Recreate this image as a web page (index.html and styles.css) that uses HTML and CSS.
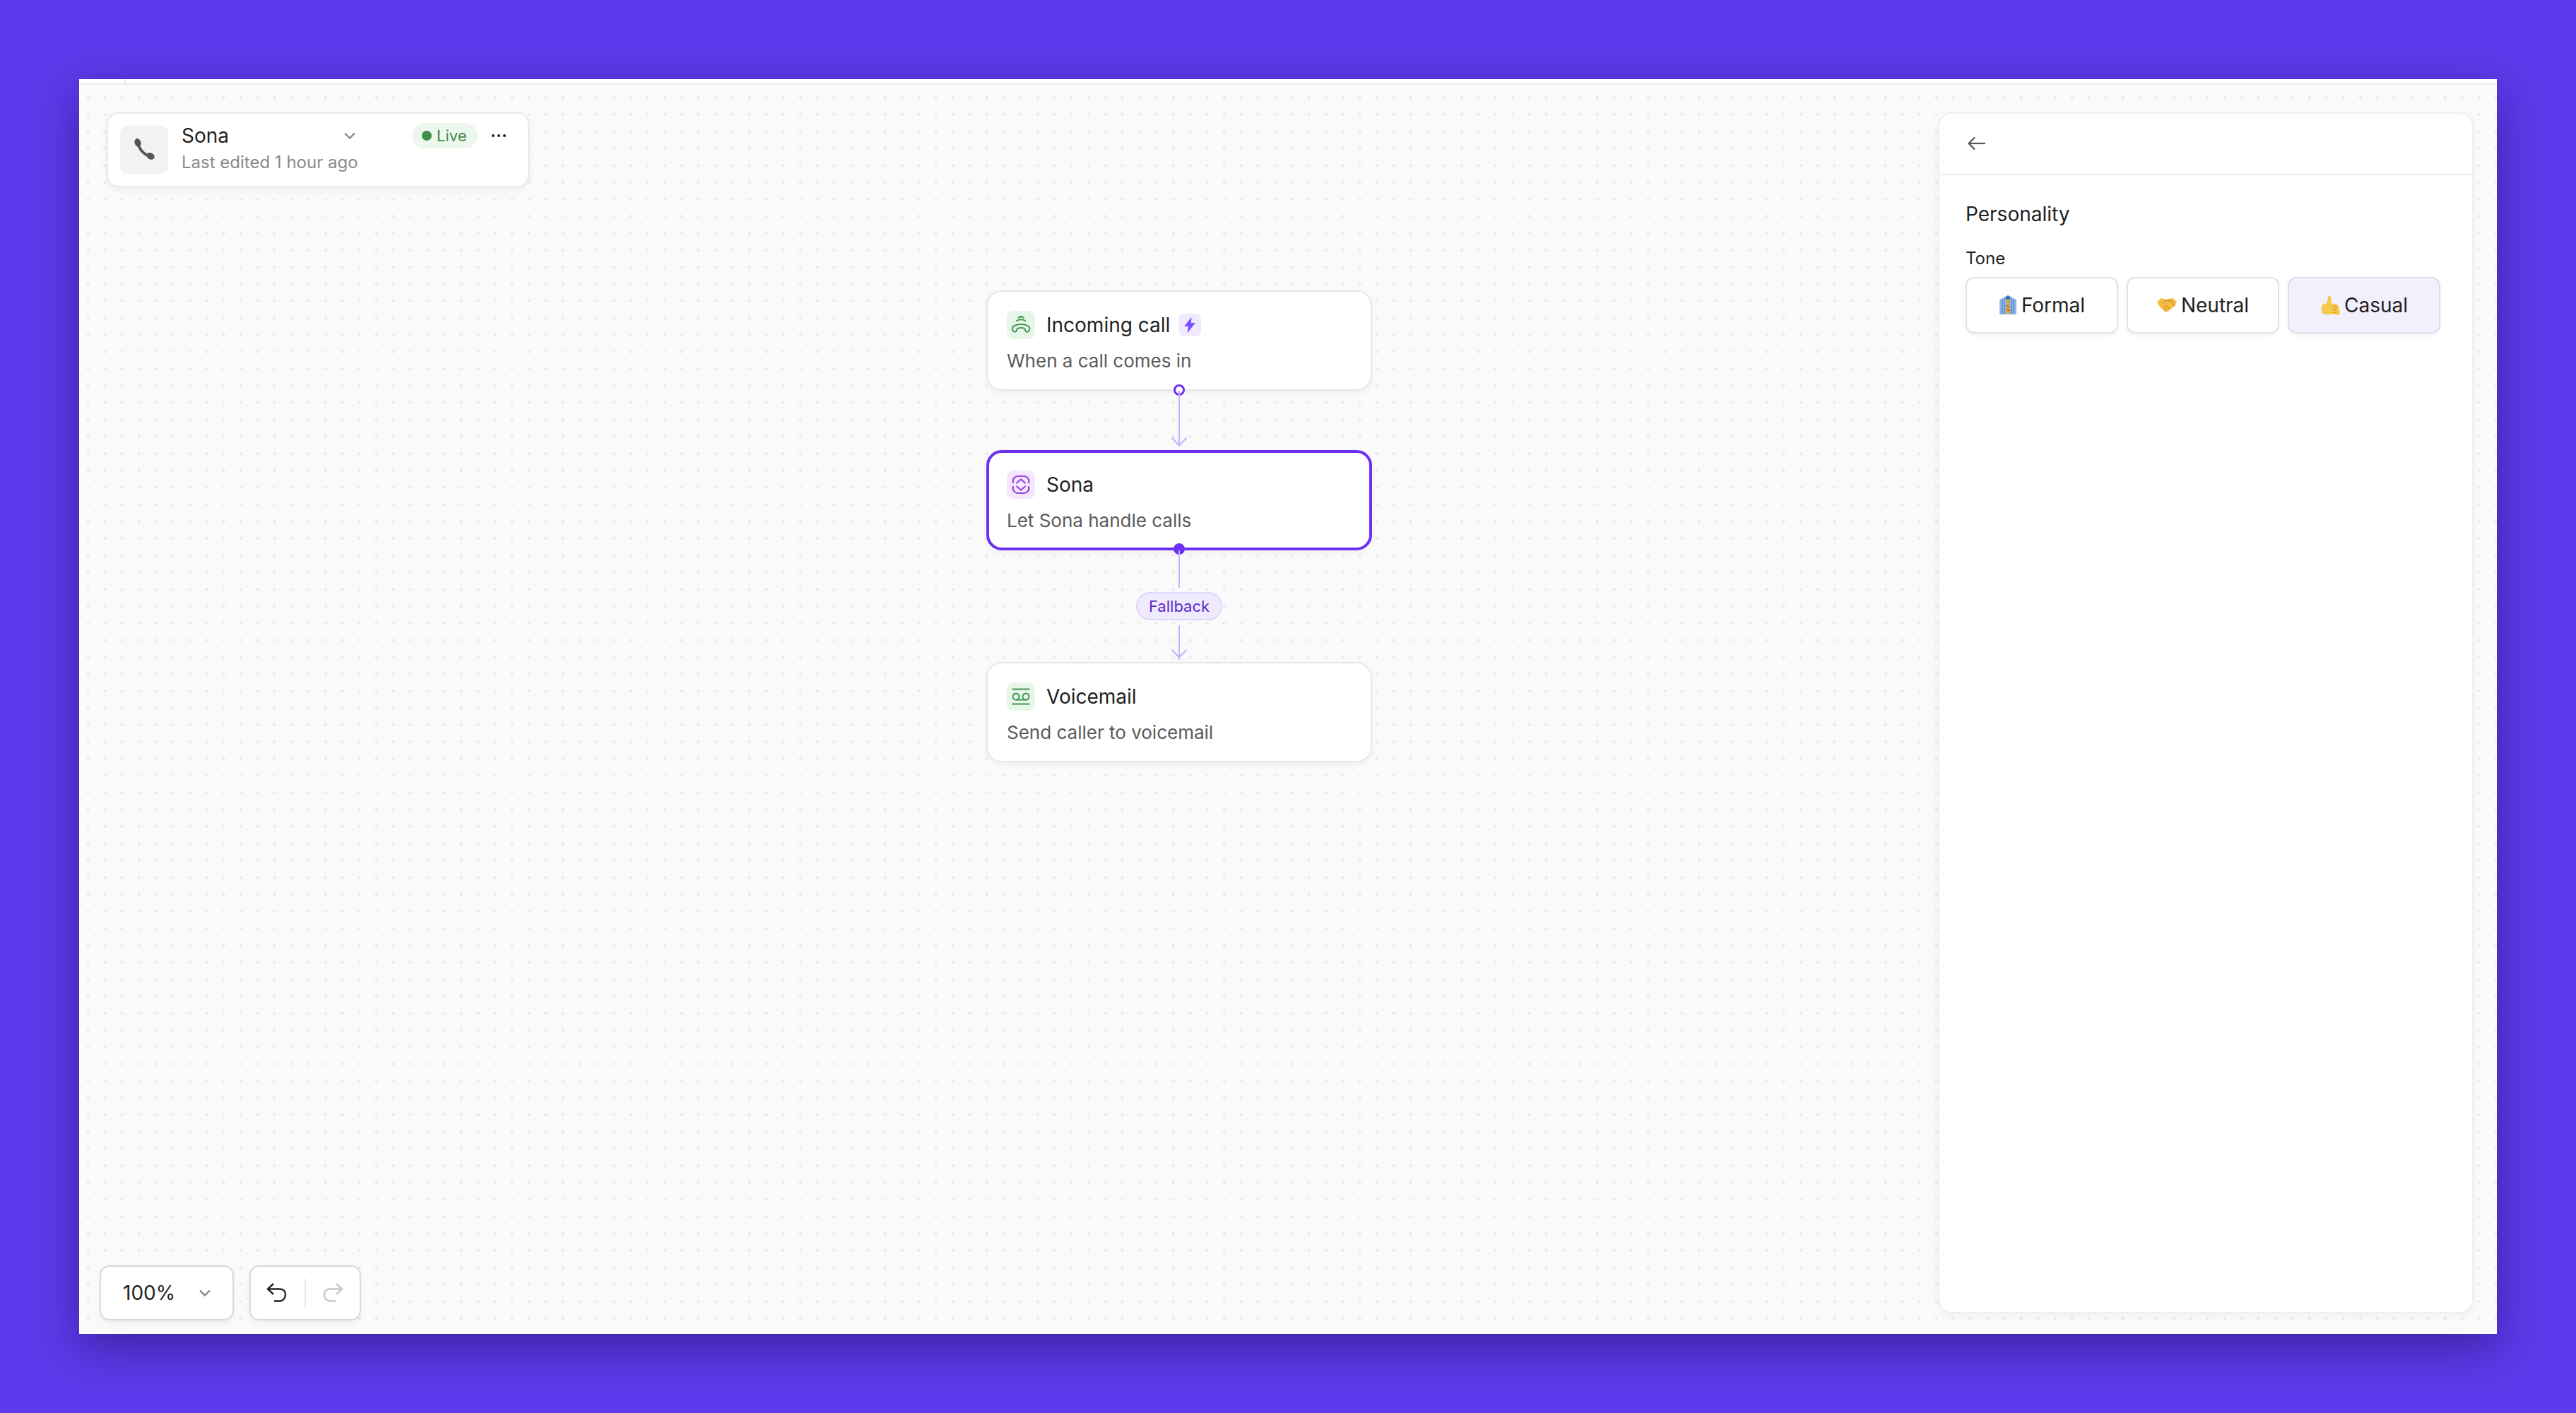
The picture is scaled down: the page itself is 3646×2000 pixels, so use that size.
FILE: index.html
```html
<!DOCTYPE html>
<html lang="en">
<head>
    <meta charset="UTF-8">
    <meta name="viewport" content="width=device-width, initial-scale=1.0">
    <title>Sona call flow</title>
    <link rel="stylesheet" href="styles.css">
</head>
<body>
    <div class="window">
        <div class="topbar"><div class="topbar-left"></div></div>
        <div class="canvas">
            <div class="agent-card">
                <div class="agent-icon">
                    <svg width="34" height="34" viewBox="0 0 34 34"><path d="M9 9C10 16 16 23 24 26" fill="none" stroke="#555" stroke-width="3.800"/><ellipse cx="8" cy="7" rx="4.400" ry="6" transform="rotate(-18 8 7)" fill="#555"/><ellipse cx="26" cy="26" rx="4.400" ry="6" transform="rotate(-62 26 26)" fill="#555"/></svg>
                </div>
                <div class="agent-main">
                    <div class="agent-row">
                        <div class="agent-name">Sona</div>
                        <svg class="agent-chevron" width="18" height="12" viewBox="0 0 18 12"><path d="M2 2.500l7 7 7-7" fill="none" stroke="#888" stroke-width="2.400"/></svg>
                        <div class="live-badge"><span class="live-dot"></span>Live</div>
                        <div class="more-dots"><span></span><span></span><span></span></div>
                    </div>
                    <div class="agent-edited">Last edited 1 hour ago</div>
                </div>
            </div>

            <div class="flow">
                <div class="node">
                    <div class="node-title">
                        <span class="node-icon icon-green">
                            <svg width="30" height="30" viewBox="0 0 30 30" fill="none" stroke="#3e9651" stroke-width="2" stroke-linecap="round"><path d="M11.500 4.500c2-1.300 5-1.300 7 0"/><path d="M9 9c3.400-2.200 8.600-2.200 12 0"/><path d="M4.500 24c-2.700-2.500-2.500-5.500 0-7.200 5.500-3.800 15.500-3.800 21 0 2.500 1.700 2.700 4.700 0 7.200-1.200 1-3 1-3.800 0-.9-1.300-.3-3.200-1.700-4-3-1.300-7-1.300-10 0-1.400.8-.8 2.700-1.700 4-.8 1-2.600 1-3.800 0z"/></svg>
                        </span>
                        Incoming call
                        <span class="bolt-badge">
                            <svg width="18" height="22" viewBox="0 0 18 22"><path d="M11 1L2 12.500h5.500L6 21l10-12.500h-6L11 1z" fill="#7c4dff" stroke="#7c4dff" stroke-width="1" stroke-linejoin="round"/></svg>
                        </span>
                    </div>
                    <div class="node-desc">When a call comes in</div>
                    <span class="handle"></span>
                </div>

                <div class="edge edge-short">
                    <svg class="edge-arrow" width="24" height="14" viewBox="0 0 24 14"><path d="M1.500 1.500L12 12.500 22.500 1.500" fill="none" stroke="#c4b2fb" stroke-width="2"/></svg>
                </div>

                <div class="node node-active">
                    <div class="node-title">
                        <span class="node-icon icon-purple">
                            <svg width="30" height="30" viewBox="0 0 30 30" fill="none" stroke="#9a46e0" stroke-width="2.200" stroke-linecap="round"><path d="M4 12C2.500 7 6.500 3 11 3h8c4.500 0 8.500 4 7 9"/><path d="M9 12.500l6-5 6 5"/><path d="M4 18c-1.500 5 2.500 9 7 9h8c4.500 0 8.500-4 7-9"/><path d="M9 17.500l6 5 6-5"/></svg>
                        </span>
                        Sona
                    </div>
                    <div class="node-desc">Let Sona handle calls</div>
                    <span class="handle handle-filled"></span>
                </div>

                <div class="edge edge-label">
                    <span class="edge-line edge-line-top"></span>
                    <span class="fallback">Fallback</span>
                    <span class="edge-line edge-line-bottom"></span>
                    <svg class="edge-arrow" width="24" height="14" viewBox="0 0 24 14"><path d="M1.500 1.500L12 12.500 22.500 1.500" fill="none" stroke="#c4b2fb" stroke-width="2"/></svg>
                </div>

                <div class="node">
                    <div class="node-title">
                        <span class="node-icon icon-green">
                            <svg width="30" height="30" viewBox="0 0 30 30" fill="none" stroke="#3e9651" stroke-width="2"><path d="M2.500 4.500h25"/><path d="M2.500 25.500h25"/><circle cx="8" cy="15" r="4.500"/><circle cx="22" cy="15" r="4.500"/><path d="M8 19.500h14"/></svg>
                        </span>
                        Voicemail
                    </div>
                    <div class="node-desc">Send caller to voicemail</div>
                </div>
            </div>

            <div class="canvas-tools">
                <div class="tool-box zoom-box">
                    <span>100%</span>
                    <svg width="18" height="12" viewBox="0 0 18 12"><path d="M2 2.500l7 7 7-7" fill="none" stroke="#888" stroke-width="2.400"/></svg>
                </div>
                <div class="tool-box history-box">
                    <svg width="30" height="30" viewBox="0 0 30 30" fill="none" stroke="#222" stroke-width="2.400"><path d="M10 2L2 9.500l8 7.500"/><path d="M2 9.500h17c5 0 8 3.200 8 8s-3.200 9-8 9h-8"/></svg>
                    <span class="tool-sep"></span>
                    <svg width="30" height="30" viewBox="0 0 30 30" fill="none" stroke="#c6c6c6" stroke-width="2.400"><path d="M20 2l8 7.500-8 7.500"/><path d="M28 9.500H11c-5 0-8 3.200-8 8s3.200 9 8 9h8"/></svg>
                </div>
            </div>

            <aside class="panel">
                <div class="panel-head">
                    <svg width="26" height="20" viewBox="0 0 26 20" fill="none" stroke="#555" stroke-width="2.200"><path d="M11 1.500L2.500 10l8.500 8.500"/><path d="M2.500 10H26"/></svg>
                </div>
                <div class="panel-body">
                    <div class="panel-title">Personality</div>
                    <div class="field-label">Tone</div>
                    <div class="tone-row">
                        <div class="tone-btn">
                            <svg width="26" height="28" viewBox="0 0 26 28"><path d="M1 6l7-3 5 3 5-3 7 3v21H1z" fill="#8fb6e6"/><path d="M5 6v21M8 5v22M21 6v21M18 5v22" stroke="#4f82c4" stroke-width="1.200"/><path d="M8 3l5-3 5 3-5 5z" fill="#3f74b8"/><path d="M11 6h4l.8 3-1.300 2 2 12-3.500 4-3.500-4 2-12-1.300-2z" fill="#e0a63a"/><path d="M10.500 14l5 3M10 19l6 3" stroke="#8a6a3a" stroke-width="1.200"/></svg>
                            Formal
                        </div>
                        <div class="tone-btn">
                            <svg width="28" height="20" viewBox="0 0 28 20"><path d="M0 5l6-5 7 2 3-1 6-1 6 5-3 6-10 8c-1.500 1-3 1-4 0L3 11z" fill="#f5bb45"/><path d="M9 6l5-3 6 1 5 7M12 10l6 5M9 12l5 5" stroke="#d18f1f" stroke-width="1.300" fill="none"/></svg>
                            Neutral
                        </div>
                        <div class="tone-btn tone-active">
                            <svg width="28" height="28" viewBox="0 0 28 28"><path d="M11 2c1.500-2 4.500-1 4.500 1.500V10l2 2h3c3 0 5 2 5.500 5l2 8-1.500 2.500c-2 .8-4 .3-6-.5H7c-3 0-5-2-5-5v-5c0-3 2-5 5-5h1l2-3z" fill="#f6c84c"/><path d="M18 16h6M18 20h6M18 24h5" stroke="#d79a24" stroke-width="1.300"/></svg>
                            Casual
                        </div>
                    </div>
                </div>
            </aside>
        </div>
    </div>
</body>
</html>
```

FILE: styles.css
```css
* {
    box-sizing: border-box;
}
html, body {
    height: 100%;
}
body {
    margin: 0;
    padding: 112px;
    background: #5d3aeb;
    font-family: 'Inter', sans-serif;
    color: #1f1f1f;
}
.window {
    display: flex;
    flex-direction: column;
    height: 1776px;
    background: #fafafa;
    box-shadow: 0 20px 60px rgba(20, 10, 70, 0.45);
}
.topbar {
    height: 8px;
    background: #fff;
    border-bottom: 2px solid #ececec;
}
.topbar-left {
    width: 66px;
    height: 6px;
    border-right: 2px solid #ececec;
}
.canvas {
    position: relative;
    flex: 1;
    background-color: #fafafa;
    background-image: radial-gradient(circle at 12px 12px, #ebebeb 1.800px, transparent 2.400px);
    background-size: 24px 24px;
    background-position: 0.67px 6px;
}

/* top left card */
.agent-card {
    position: absolute;
    left: 39px;
    top: 39px;
    width: 598px;
    height: 106px;
    display: flex;
    align-items: center;
    padding: 0 17px;
    background: #fff;
    border: 2px solid #e8e8e8;
    border-radius: 16px;
    box-shadow: 0 4px 12px rgba(0, 0, 0, 0.05);
}
.agent-icon {
    display: flex;
    align-items: center;
    justify-content: center;
    width: 68px;
    height: 68px;
    background: #f2f2f2;
    border-radius: 10px;
}
.agent-main {
    flex: 1;
    margin-left: 19px;
}
.agent-row {
    display: flex;
    align-items: center;
    height: 36px;
    margin-top: -5px;
}
.agent-name {
    width: 229px;
    font-size: 28px;
    line-height: 34px;
}
.live-badge {
    display: flex;
    align-items: center;
    gap: 7px;
    width: 93px;
    height: 36px;
    margin-left: 79px;
    padding-left: 14px;
    background: #eef7ee;
    border-radius: 18px;
    font-size: 22px;
    color: #3e8e47;
    white-space: nowrap;
}
.live-dot {
    width: 14px;
    height: 14px;
    background: #3e8e47;
    border-radius: 50%;
}
.more-dots {
    display: flex;
    gap: 4px;
    margin-left: 20px;
}
.more-dots span {
    width: 4px;
    height: 4px;
    background: #222;
    border-radius: 50%;
}
.agent-edited {
    margin-top: 5px;
    font-size: 24px;
    line-height: 30px;
    color: #8a8a8a;
    white-space: nowrap;
}

/* flow in the middle */
.flow {
    position: absolute;
    left: 1284px;
    top: 291px;
    width: 546px;
}
.node {
    position: relative;
    height: 142px;
    padding: 27px 27px 0;
    background: #fff;
    border: 2px solid #e7e7ea;
    border-radius: 22px;
    box-shadow: 0 3px 8px rgba(0, 0, 0, 0.05);
}
.node-active {
    border: 4px solid #6d2ff2;
    padding: 25px 25px 0;
}
.node-title {
    display: flex;
    align-items: center;
    font-size: 28px;
    line-height: 40px;
}
.node-icon {
    display: flex;
    align-items: center;
    justify-content: center;
    width: 40px;
    height: 40px;
    margin-right: 16px;
    border-radius: 9px;
}
.icon-green {
    background: #e8f6ea;
}
.icon-purple {
    background: #f4e7fe;
}
.bolt-badge {
    display: flex;
    align-items: center;
    justify-content: center;
    width: 32px;
    height: 32px;
    margin-left: 12px;
    background: #efe9ff;
    border-radius: 8px;
}
.node-desc {
    margin-top: 15px;
    font-size: 26px;
    line-height: 32px;
    color: #5a5a5a;
}
.handle {
    position: absolute;
    left: 50%;
    bottom: -9px;
    width: 16px;
    height: 16px;
    margin-left: -8px;
    background: #fff;
    border: 3px solid #6d2ff2;
    border-radius: 50%;
}
.handle-filled {
    background: #6d2ff2;
    bottom: -10px;
}
.edge {
    position: relative;
}
.edge-short {
    height: 84px;
}
.edge-short:before {
    content: "";
    position: absolute;
    left: 272px;
    top: 0;
    bottom: 6px;
    width: 2px;
    background: #c4b2fb;
}
.edge-arrow {
    position: absolute;
    left: 261px;
    bottom: 5px;
}
.edge-label {
    display: flex;
    flex-direction: column;
    align-items: center;
    height: 158px;
}
.edge-line {
    width: 2px;
    background: #c4b2fb;
}
.edge-line-top {
    height: 53px;
}
.edge-line-bottom {
    height: 49px;
    margin-top: 7px;
}
.fallback {
    display: flex;
    align-items: center;
    height: 40px;
    margin-top: 6px;
    padding: 0 16px;
    background: #f0eaff;
    border: 2px solid #e0d6fb;
    border-radius: 20px;
    font-size: 22px;
    color: #5a28c8;
}

/* bottom left tools */
.canvas-tools {
    position: absolute;
    left: 29px;
    bottom: 19px;
    display: flex;
    gap: 22px;
}
.tool-box {
    display: flex;
    align-items: center;
    height: 78px;
    background: #fff;
    border: 2px solid #d9d9d9;
    border-radius: 14px;
    box-shadow: 0 4px 10px rgba(0, 0, 0, 0.05);
}
.zoom-box {
    width: 190px;
    padding: 0 30px 0 31px;
    justify-content: space-between;
    font-size: 28px;
}
.history-box {
    width: 158px;
    padding: 0 23px 0 22px;
    justify-content: space-between;
}
.tool-sep {
    width: 2px;
    height: 40px;
    background: #e6e6e6;
}

/* right panel */
.panel {
    position: absolute;
    left: 2631px;
    top: 39px;
    width: 758px;
    height: 1700px;
    background: #fff;
    border: 2px solid #efefef;
    border-radius: 20px;
    box-shadow: 0 4px 14px rgba(0, 0, 0, 0.04);
}
.panel-head {
    display: flex;
    align-items: center;
    height: 87px;
    padding: 0 0 0 39px;
    border-bottom: 2px solid #ececec;
}
.panel-head svg {
    margin-top: -2px;
}
.panel-body {
    padding: 38px 37px;
}
.panel-title {
    font-size: 28px;
    line-height: 34px;
}
.field-label {
    margin-top: 31px;
    font-size: 24px;
    line-height: 30px;
}
.tone-row {
    display: flex;
    gap: 12px;
    margin-top: 11px;
}
.tone-btn {
    display: flex;
    align-items: center;
    justify-content: center;
    gap: 6px;
    width: 216px;
    height: 80px;
    background: #fff;
    border: 2px solid #e2e2e2;
    border-radius: 12px;
    box-shadow: 0 3px 6px rgba(0, 0, 0, 0.05);
    font-size: 28px;
}
.tone-active {
    background: #f3effd;
    border-color: #e0dcec;
}
```
